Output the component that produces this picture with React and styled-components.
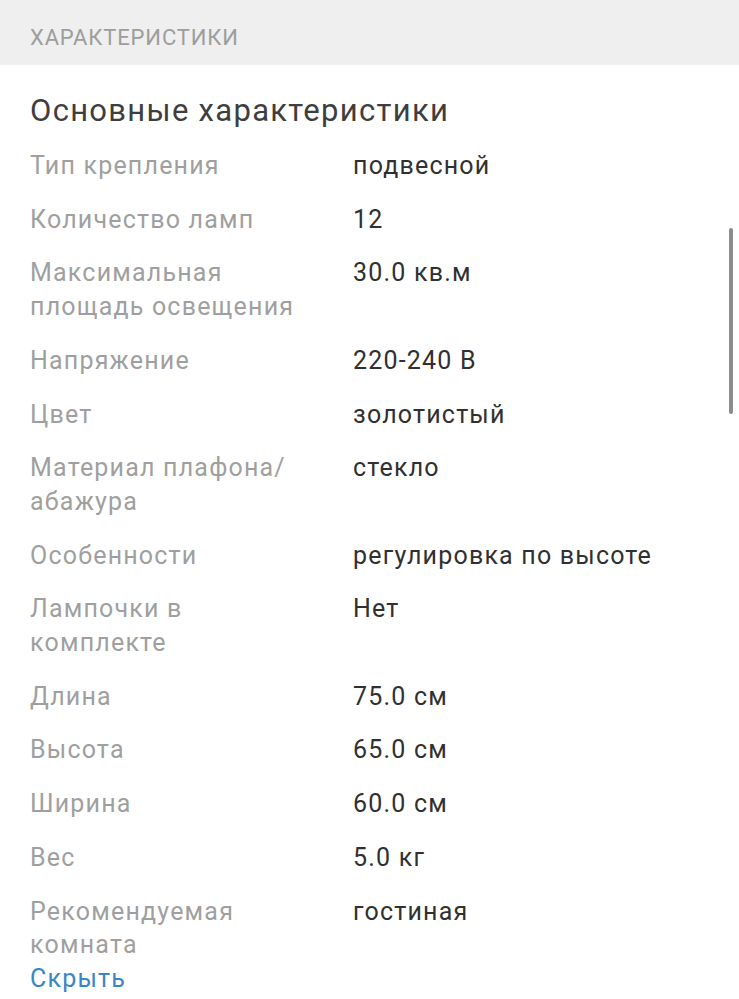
import React from 'react'
import styled, { createGlobalStyle } from 'styled-components'

const Global = createGlobalStyle`
  html, body {
    margin: 0;
    padding: 0;
    background: #ffffff;
    font-family: Roboto, "Noto Sans", sans-serif;
  }
`

const specs = [
  { name: 'Тип крепления', value: 'подвесной' },
  { name: 'Количество ламп', value: '12' },
  { name: 'Максимальная площадь освещения', value: '30.0 кв.м' },
  { name: 'Напряжение', value: '220-240 В' },
  { name: 'Цвет', value: 'золотистый' },
  { name: 'Материал плафона/абажура', value: 'стекло' },
  { name: 'Особенности', value: 'регулировка по высоте' },
  { name: 'Лампочки в комплекте', value: 'Нет' },
  { name: 'Длина', value: '75.0 см' },
  { name: 'Высота', value: '65.0 см' },
  { name: 'Ширина', value: '60.0 см' },
  { name: 'Вес', value: '5.0 кг' },
  { name: 'Рекомендуемая комната', value: 'гостиная' },
]

const Page = styled.div`
  position: relative;
  width: 739px;
  height: 999px;
  overflow: hidden;
`

const SectionBar = styled.div`
  height: 65px;
  background: #efefef;
  display: flex;
  align-items: center;
  padding: 10px 30px 0;
  box-sizing: border-box;
  color: #9d9d9d;
  font-size: 22px;
  letter-spacing: 0.85px;
  text-transform: uppercase;
`

const Body = styled.div`
  padding: 25px 30px 0;
`

const Title = styled.h2`
  margin: 0 0 17px;
  font-weight: 400;
  font-size: 31px;
  letter-spacing: 1.3px;
  line-height: 42px;
  color: #3e3e3e;
`

const Table = styled.div`
  display: grid;
  grid-template-columns: 323px 1fr;
  row-gap: 20px;
`

const Label = styled.div`
  font-size: 25px;
  letter-spacing: 1.2px;
  line-height: 33.7px;
  color: #9f9f9f;
  padding-right: 40px;
`

const Value = styled.div`
  font-size: 25px;
  letter-spacing: 1.2px;
  line-height: 33.7px;
  color: #303030;
`

const Toggle = styled.a`
  display: block;
  font-size: 25px;
  letter-spacing: 1.2px;
  line-height: 34px;
  color: #3b85c5;
  text-decoration: none;
  cursor: pointer;
`

const Scrollbar = styled.div`
  position: absolute;
  right: 6px;
  top: 228px;
  width: 4px;
  height: 186px;
  border-radius: 2px;
  background: #8c8c8c;
`

export default function App() {
  return (
    <Page>
      <Global />
      <SectionBar>Характеристики</SectionBar>
      <Body>
        <Title>Основные характеристики</Title>
        <Table>
          {specs.map((s, i) => (
            <React.Fragment key={i}>
              <Label>{s.name}</Label>
              <Value>{s.value}</Value>
            </React.Fragment>
          ))}
        </Table>
        <Toggle>Скрыть</Toggle>
      </Body>
      <Scrollbar />
    </Page>
  )
}
